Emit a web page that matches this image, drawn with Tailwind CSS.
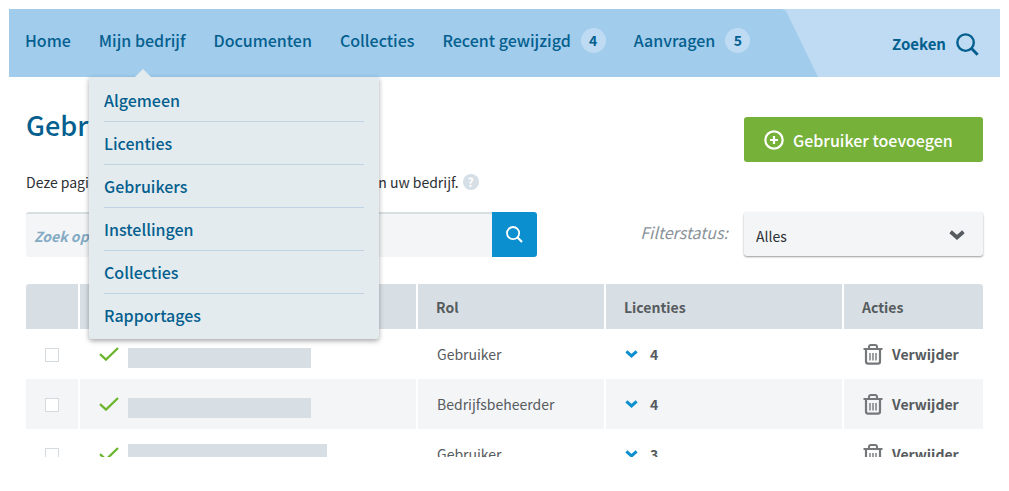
<!DOCTYPE html>
<html lang="nl">
<head>
<meta charset="utf-8">
<meta name="viewport" content="width=device-width, initial-scale=1">
<title>Gebruikers</title>
<script src="https://cdn.jsdelivr.net/npm/@tailwindcss/browser@4"></script>
</head>
<body class="bg-white p-[9px] font-['Noto_Sans_CJK_SC','Noto_Sans',sans-serif] text-[14px] leading-5 text-[#2c2f33]">
<svg class="hidden" aria-hidden="true">
  <symbol id="check" viewBox="0 0 20 14"><path d="M1 7.200 7 12.600 19 1" fill="none" stroke="#6cb52d" stroke-width="2.300"/></symbol>
  <symbol id="chevron" viewBox="0 0 16 10"><path d="M1.600 1.800 8 7.400l6.400-5.600" fill="none" stroke="currentColor" stroke-width="3.800"/></symbol>
  <symbol id="lens" viewBox="0 0 24 24"><circle cx="10" cy="10" r="8.600" fill="none" stroke="currentColor" stroke-width="2.500"/><path d="m16 16 6.600 6.600" stroke="currentColor" stroke-width="3"/></symbol>
  <symbol id="trash" viewBox="0 0 20 21"><g fill="none" stroke="#74787b"><path d="M.5 5H19.500" stroke-width="2"/><path d="M6 5V3q0-2 2-2h4q2 0 2 2v2" stroke-width="2"/><path d="M3 5v12.500q0 2.200 2.200 2.200h9.600q2.200 0 2.200-2.200V5" stroke-width="2.200"/><path d="M7 9v7.500M10 9v7.500M13 9v7.500" stroke-width="1.400"/></g></symbol>
</svg>

<header class="flex h-[68px] bg-[#bedbf3] font-medium text-[#045f8f]">
  <nav class="relative flex w-[767px] bg-[#a1ccec] pl-4">
    <ul class="flex h-[62px] items-center gap-7 text-[16px] whitespace-nowrap">
      <li><a href="#">Home</a></li>
      <li><a href="#" aria-haspopup="true" aria-expanded="true">Mijn bedrijf</a></li>
      <li><a href="#">Documenten</a></li>
      <li><a href="#">Collecties</a></li>
      <li><a href="#" class="flex items-center gap-[10px]">Recent gewijzigd <span class="flex size-[25px] items-center justify-center rounded-full bg-[#bedbf3] text-[14px] font-bold">4</span></a></li>
      <li><a href="#" class="flex items-center gap-[10px]">Aanvragen <span class="flex size-[25px] items-center justify-center rounded-full bg-[#bedbf3] text-[14px] font-bold">5</span></a></li>
    </ul>
    <div class="absolute top-full left-20 z-10 w-[290px] rounded-b-[3px] bg-[#e3ebee] px-[15px] pt-[2px] pb-[3px] text-[16px] shadow-[0_2px_5px_rgba(0,0,0,0.35)]">
      <svg class="absolute -top-2 left-[46px] h-2 w-4" viewBox="0 0 16 8" aria-hidden="true"><path d="M0 8 8 0l8 8z" fill="#e3ebee"/></svg>
      <ul class="divide-y divide-[#c0d3e2]">
        <li><a href="#" class="block py-[11px]">Algemeen</a></li>
        <li><a href="#" class="block py-[11px]">Licenties</a></li>
        <li><a href="#" class="block py-[11px]">Gebruikers</a></li>
        <li><a href="#" class="block py-[11px]">Instellingen</a></li>
        <li><a href="#" class="block py-[11px]">Collecties</a></li>
        <li><a href="#" class="block py-[11px]">Rapportages</a></li>
      </ul>
    </div>
  </nav>
  <svg class="h-[68px] w-[42px]" viewBox="0 0 42 68" aria-hidden="true"><path d="M0 0H4Q9 0 11 4L42 68H0Z" fill="#a1ccec"/></svg>
  <a href="#" class="mt-[25px] mr-[21px] ml-auto flex h-5 items-center gap-[10px] text-[15px] font-bold">Zoeken <svg class="size-[23px]" aria-hidden="true"><use href="#lens"/></svg></a>
</header>

<main class="px-[17px]">
  <div class="flex items-start justify-between pt-10">
    <h1 class="-mt-2 text-[27px] leading-8 font-medium text-[#045f8f]">Gebruikers</h1>
    <button type="button" class="flex h-[45px] w-[239px] items-center gap-[9px] rounded-[3px] bg-[#76b13a] pl-[20px] text-[16px] font-medium whitespace-nowrap text-white">
      <svg class="size-5" viewBox="0 0 20 20" fill="none" stroke="currentColor" stroke-width="2.200" aria-hidden="true"><circle cx="10" cy="10" r="8.700"/><path d="M10 6v8M6 10h8"/></svg>
      Gebruiker toevoegen
    </button>
  </div>
  <p class="mt-[10px] flex items-center gap-1 whitespace-nowrap">Deze pagina toont een overzicht van alle gebruikers van uw bedrijf.
    <button type="button" aria-label="Uitleg" class="flex size-4 items-center justify-center rounded-full bg-[#d5dfe5] text-[12px] font-bold text-white">?</button>
  </p>
  <div class="mt-5 flex items-start justify-between">
    <form class="flex h-[45px] w-[511px]">
      <input type="search" aria-label="Zoek gebruikers" placeholder="Zoek op naam" class="min-w-0 flex-1 rounded-l-[3px] border-t-2 border-[#d8dfe3] bg-[#f3f5f7] px-2 font-bold italic placeholder:text-[#84abc3]">
      <button type="submit" aria-label="Zoeken" class="flex w-[45px] items-center justify-center rounded-r-[3px] bg-[#0b8fce] text-white"><svg class="size-[17px]" aria-hidden="true"><use href="#lens"/></svg></button>
    </form>
    <div class="flex items-start gap-4">
      <label for="status" class="pt-[10px] text-[16px] text-[#8b9399] italic">Filterstatus:</label>
      <div class="relative">
        <select id="status" class="h-11 w-[239px] appearance-none rounded-[3px] bg-[#f3f5f7] pt-1 pl-3 shadow-[0_1px_2px_rgba(0,0,0,0.4)]"><option>Alles</option></select>
        <svg class="pointer-events-none absolute top-[18px] right-[18px] h-[10px] w-4 text-[#565b60]" aria-hidden="true"><use href="#chevron"/></svg>
      </div>
    </div>
  </div>

  <div class="mt-[27px] max-h-[173px] overflow-hidden">
    <table class="w-full table-fixed border-separate border-spacing-0 text-left text-[#565b5e]">
      <colgroup><col class="w-[54px]"><col><col class="w-[188px]"><col class="w-[238px]"><col class="w-[139px]"></colgroup>
      <thead>
        <tr class="h-[45px] bg-[#d8dfe4]">
          <th class="rounded-tl-[3px] border-r-2 border-white"></th>
          <th class="border-r-2 border-white pl-[18px]">Naam</th>
          <th class="border-r-2 border-white pl-[18px]">Rol</th>
          <th class="border-r-2 border-white pl-[18px]">Licenties</th>
          <th class="rounded-tr-[3px] pl-[18px]">Acties</th>
        </tr>
      </thead>
      <tbody>
        <tr class="h-[50px]">
          <td class="border-r-2 border-white"><input type="checkbox" aria-label="Selecteer gebruiker 1" class="mx-auto mt-[2px] block size-[14px] appearance-none border border-[#d5dadf] bg-white"></td>
          <td class="border-r-2 border-white pl-[19px]"><div class="flex items-center gap-[9px]"><svg class="h-[14px] w-5" aria-hidden="true"><use href="#check"/></svg><span class="mt-2 h-5 w-[183px] bg-[#d8dfe4]"></span></div></td>
          <td class="border-r-2 border-white pl-[19px]">Gebruiker</td>
          <td class="border-r-2 border-white pl-[19px]"><button type="button" class="flex items-center gap-[12px] font-bold"><svg class="h-2 w-[13px] text-[#0b8fce]" aria-hidden="true"><use href="#chevron"/></svg>4</button></td>
          <td class="pl-[19px]"><button type="button" class="flex items-center gap-[9px] font-bold"><svg class="h-[21px] w-5" aria-hidden="true"><use href="#trash"/></svg>Verwijder</button></td>
        </tr>
        <tr class="h-[50px] bg-[#f3f5f7]">
          <td class="border-r-2 border-white"><input type="checkbox" aria-label="Selecteer gebruiker 2" class="mx-auto mt-[2px] block size-[14px] appearance-none border border-[#d5dadf] bg-white"></td>
          <td class="border-r-2 border-white pl-[19px]"><div class="flex items-center gap-[9px]"><svg class="h-[14px] w-5" aria-hidden="true"><use href="#check"/></svg><span class="mt-2 h-5 w-[183px] bg-[#d8dfe4]"></span></div></td>
          <td class="border-r-2 border-white pl-[19px]">Bedrijfsbeheerder</td>
          <td class="border-r-2 border-white pl-[19px]"><button type="button" class="flex items-center gap-[12px] font-bold"><svg class="h-2 w-[13px] text-[#0b8fce]" aria-hidden="true"><use href="#chevron"/></svg>4</button></td>
          <td class="pl-[19px]"><button type="button" class="flex items-center gap-[9px] font-bold"><svg class="h-[21px] w-5" aria-hidden="true"><use href="#trash"/></svg>Verwijder</button></td>
        </tr>
        <tr class="h-[50px]">
          <td class="border-r-2 border-white"><input type="checkbox" aria-label="Selecteer gebruiker 3" class="mx-auto mt-[2px] block size-[14px] appearance-none border border-[#d5dadf] bg-white"></td>
          <td class="border-r-2 border-white pl-[19px]"><div class="flex items-center gap-[9px]"><svg class="h-[14px] w-5" aria-hidden="true"><use href="#check"/></svg><span class="mt-2 h-7 w-[199px] bg-[#d8dfe4]"></span></div></td>
          <td class="border-r-2 border-white pl-[19px]">Gebruiker</td>
          <td class="border-r-2 border-white pl-[19px]"><button type="button" class="flex items-center gap-[12px] font-bold"><svg class="h-2 w-[13px] text-[#0b8fce]" aria-hidden="true"><use href="#chevron"/></svg>3</button></td>
          <td class="pl-[19px]"><button type="button" class="flex items-center gap-[9px] font-bold"><svg class="h-[21px] w-5" aria-hidden="true"><use href="#trash"/></svg>Verwijder</button></td>
        </tr>
      </tbody>
    </table>
  </div>
</main>
</body>
</html>
